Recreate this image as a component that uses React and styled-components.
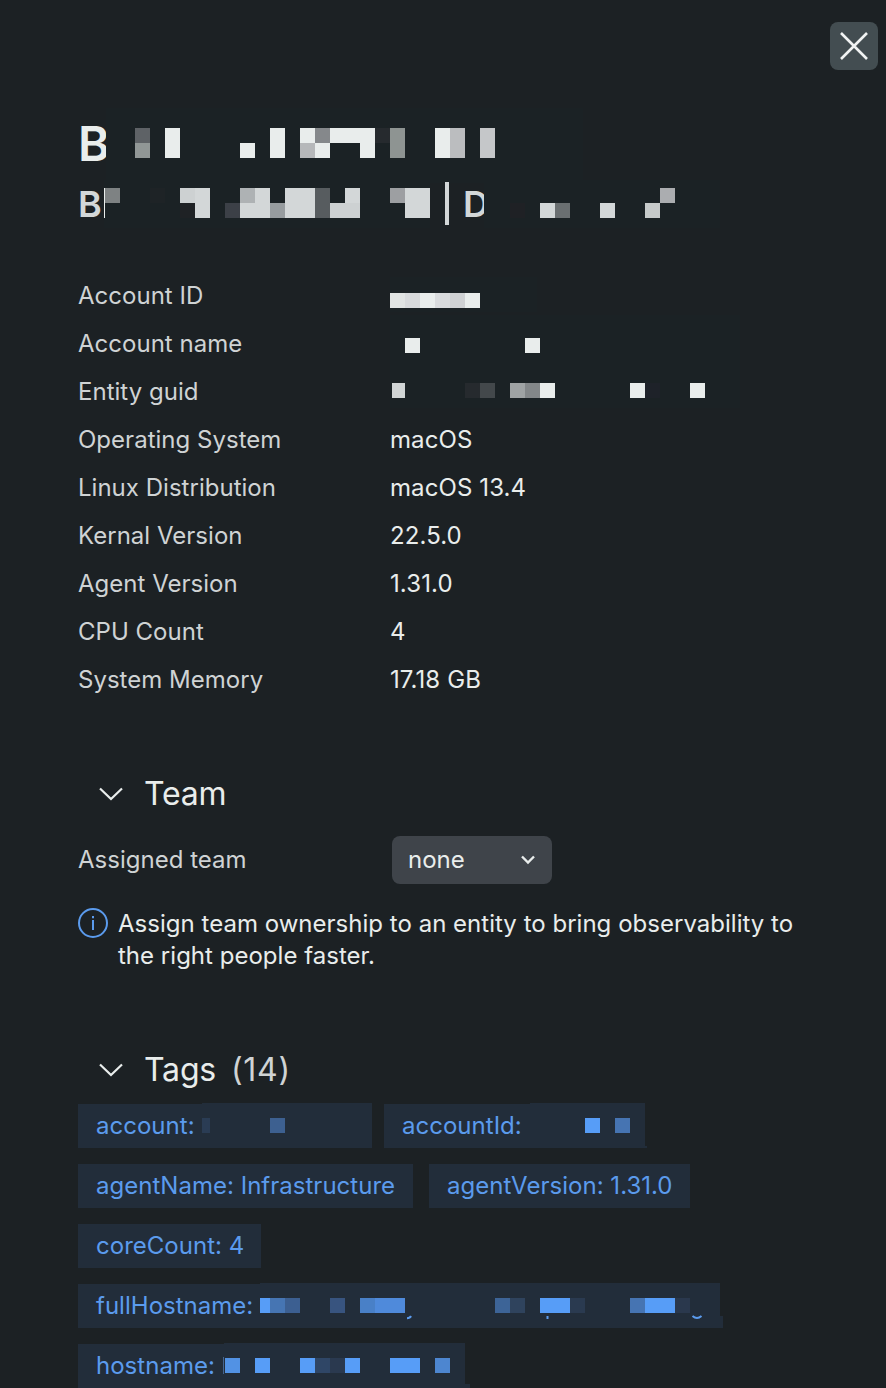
import React from "react";
import styled, { createGlobalStyle } from "styled-components";

const BG = "#1c2124";
const PATCH = "#1b2225";
const TAG_BG = "#222d3a";
const W = "#e9edec";
const L = "#d3d7d8";
const BLUE = "#579df7";

const GlobalStyle = createGlobalStyle`
  * { box-sizing: border-box; }
  html { overflow: hidden; }
  body {
    margin: 0;
    background: ${BG};
    font-family: Inter, "Liberation Sans", sans-serif;
    color: ${W};
  }
`;

const Panel = styled.main`
  position: relative;
  display: flex;
  flex-direction: column;
  width: 886px;
  height: 1388px;
  padding: 118px 78px 0;
  overflow: hidden;
  background: ${BG};
  font-size: 24px;
  line-height: 32px;
  letter-spacing: 0.02px;
`;

const CloseButton = styled.button`
  position: absolute;
  top: 22px;
  right: 8px;
  display: grid;
  place-items: center;
  width: 48px;
  height: 48px;
  padding: 0;
  border: 0;
  border-radius: 8px;
  background: #434d51;
  color: #f1f3f3;
`;

const Heading = styled.header`
  display: flex;
  flex-direction: column;
  margin-bottom: 40px;
`;

const HeadingRow = styled.div`
  display: flex;
  height: ${(p) => p.$height}px;
`;

const Title = styled.h1`
  width: 28px;
  margin: 0;
  font-size: 48px;
  font-weight: 600;
  line-height: 52px;
  letter-spacing: 0;
`;

const Subtitle = styled.h2`
  width: ${(p) => p.$width}px;
  margin: 0;
  color: ${L};
  font-size: 36px;
  font-weight: 600;
  line-height: 52px;
  letter-spacing: 0;
`;

const Divider = styled.span`
  width: 4px;
  height: 43px;
  margin: 4px 14px 0 15px;
  background: ${L};
`;

const MosaicSvg = styled.svg`
  display: block;
  flex: none;
  overflow: visible;
`;

const Details = styled.dl`
  margin: 0;
`;

const DetailRow = styled.div`
  display: grid;
  grid-template-columns: 312px 1fr;
  align-items: center;
  height: 48px;
`;

const Label = styled.dt`
  color: #cfd3d4;
`;

const Value = styled.dd`
  margin: 0;
  letter-spacing: 0.1px;
`;

const SectionTitle = styled.h3`
  display: flex;
  align-items: center;
  height: 44px;
  margin: ${(p) => p.$top}px 0 0 20px;
  font-size: 32px;
  font-weight: 400;
  line-height: 44px;
  letter-spacing: -0.2px;

  svg { margin-right: 20px; }
`;

const Count = styled.span`
  margin-left: 15px;
  color: #cfd3d4;
  letter-spacing: 0.7px;
`;

const TeamRow = styled.div`
  display: grid;
  grid-template-columns: 314px 160px;
  align-items: center;
  height: 48px;
  margin-top: 20px;
  color: #cfd3d4;
`;

const Select = styled.button`
  display: flex;
  align-items: center;
  justify-content: space-between;
  height: 48px;
  padding: 0 16px;
  border: 0;
  border-radius: 8px;
  background: #3f444a;
  color: ${W};
  font: inherit;
  letter-spacing: inherit;
`;

const Hint = styled.div`
  display: flex;
  gap: 10px;
  margin-top: 24px;

  svg { flex: none; }
  p { margin: 0; white-space: nowrap; }
`;

const Tags = styled.div`
  display: flex;
  flex-direction: column;
  gap: 16px;
  margin-top: 12px;
`;

const TagRow = styled.div`
  display: flex;
  gap: 16px;
`;

const Tag = styled.span`
  display: flex;
  align-items: center;
  flex: none;
  width: ${(p) => p.$width}px;
  height: 44px;
  padding-left: 18px;
  background: ${TAG_BG};
  color: #5b9bed;
  white-space: nowrap;
`;

const TagKey = styled.span`
  flex: none;
  width: ${(p) => p.$width}px;
`;

/* cells: [x, y, width, height, fill] */
const Mosaic = ({ width, height, cells, children }) => (
  <MosaicSvg width={width} height={height} shapeRendering="crispEdges" aria-hidden="true">
    {cells.map(([x, y, w, h, fill], i) => (
      <rect key={i} x={x} y={y} width={w} height={h} fill={fill} />
    ))}
    {children}
  </MosaicSvg>
);

const titleCells = [
  [0, -10, 477, 75, PATCH],
  [29, 10, 15, 15, "#5e6266"], [29, 25, 15, 15, "#919796"],
  [59, 10, 15, 30, W], [134, 25, 15, 15, W], [164, 10, 15, 30, W],
  [194, 10, 15, 15, W], [194, 25, 15, 15, "#b6b8ba"],
  [209, 10, 15, 15, "#85888b"], [209, 25, 15, 15, W],
  [224, 10, 45, 15, W], [254, 25, 15, 15, W],
  [269, 10, 15, 15, "#262a2e"], [284, 10, 15, 30, "#8e9492"],
  [329, 10, 15, 30, W], [344, 10, 15, 30, "#bbbdbf"], [374, 10, 15, 30, "#c5c7c9"],
];

const subtitleCells = [
  [0, 2, 326, 48, PATCH],
  [0, 10, 1, 30, W], [1, 10, 15, 15, "#7e8283"], [46, 10, 15, 15, "#1e2326"],
  [76, 10, 15, 15, "#cdd1d2"], [76, 25, 15, 15, "#1f2225"], [91, 10, 15, 30, L],
  [121, 25, 15, 15, "#3c4047"], [136, 10, 15, 15, "#aeb2b4"], [136, 25, 15, 15, L],
  [151, 10, 15, 30, L], [166, 25, 15, 15, "#979c9f"], [181, 10, 30, 30, L],
  [211, 10, 15, 30, "#575c5f"], [226, 25, 30, 15, "#cdd1d2"], [241, 10, 15, 15, L],
  [286, 10, 15, 15, "#9d9fa2"], [301, 10, 25, 30, L],
];

const subtitleEndCells = [
  [0, 2, 236, 48, PATCH],
  [26, 25, 15, 15, "#1f2125"], [56, 25, 15, 15, L], [71, 25, 15, 15, "#6a6f71"],
  [116, 25, 15, 15, L], [161, 25, 15, 15, "#c6caca"], [176, 10, 15, 15, "#abadb0"],
];

const accountIdCells = [
  [0, 5, 147, 35, PATCH],
  [0, 21, 15, 15, "#e1e4e3"], [15, 21, 15, 15, "#d8dadc"], [30, 21, 15, 15, W],
  [45, 21, 15, 15, "#d9dbdd"], [60, 21, 15, 15, "#cfd1d3"], [75, 21, 15, 15, W],
];

const accountNameCells = [
  [0, -5, 350, 53, PATCH], [15, 18, 15, 15, W], [135, 18, 15, 15, W],
];

const guidCells = [
  [0, 0, 350, 40, PATCH],
  [2, 15, 13, 15, "#d1d5d5"], [75, 15, 15, 15, "#262a2e"], [90, 15, 15, 15, "#43484b"],
  [120, 15, 15, 15, "#9fa3a4"], [135, 15, 15, 15, "#838789"], [150, 15, 15, 15, W],
  [240, 15, 15, 15, W], [255, 15, 15, 15, "#1e2229"], [300, 15, 15, 15, W],
];

const accountCells = [
  [0, -1, 170, 45, TAG_BG], [0, 14, 8, 15, "#2a3c54"], [68, 14, 15, 15, "#3d6090"],
];
const accountNumberCells = [
  [0, -1, 115, 44, TAG_BG], [115, 0, 2, 42, BG],
  [55, 14, 15, 15, BLUE], [85, 14, 15, 15, "#4674b2"],
];
const fullHostCells = [
  [0, -1, 460, 34, TAG_BG], [460, 0, 3, 32, BG],
  [0, 14, 10, 15, BLUE], [10, 14, 15, 15, "#4675b3"], [25, 14, 15, 15, "#3c5f91"],
  [70, 14, 15, 15, "#38547f"], [100, 14, 15, 15, "#4980c7"], [115, 14, 30, 15, "#4f8adb"],
  [235, 14, 15, 15, "#3d6497"], [250, 14, 15, 15, "#2f435d"],
  [280, 14, 30, 15, BLUE], [310, 14, 15, 15, "#2a3a50"],
  [370, 14, 15, 15, "#4674b2"], [385, 14, 30, 15, BLUE], [415, 14, 15, 15, "#2a384d"],
];
const hostCells = [
  [0, -1, 241, 41, TAG_BG], [241, 0, 5, 40, BG],
  [-1, 13, 1, 17, "#45658f"], [1, 14, 15, 15, "#5292e4"], [31, 14, 15, 15, BLUE],
  [76, 14, 15, 15, BLUE], [91, 14, 15, 15, "#2f4666"], [106, 14, 15, 15, "#2a394f"],
  [121, 14, 15, 15, BLUE], [166, 14, 30, 15, BLUE], [211, 14, 15, 15, "#4d86d0"],
];

const details = [
  ["Account ID", <Mosaic width={350} height={48} cells={accountIdCells} />],
  ["Account name", <Mosaic width={350} height={48} cells={accountNameCells} />],
  ["Entity guid", <Mosaic width={350} height={48} cells={guidCells} />],
  ["Operating System", "macOS"],
  ["Linux Distribution", "macOS 13.4"],
  ["Kernal Version", "22.5.0"],
  ["Agent Version", "1.31.0"],
  ["CPU Count", "4"],
  ["System Memory", "17.18 GB"],
];

const SectionChevron = () => (
  <svg width="26" height="26" viewBox="0 0 26 26" fill="none" stroke={W} strokeWidth="2.2">
    <path d="M2 7.5 13 18 24 7.5" />
  </svg>
);

export default function App() {
  return (
    <>
      <GlobalStyle />
      <Panel>
        <CloseButton aria-label="Close">
          <svg width="28" height="28" viewBox="0 0 28 28" stroke="currentColor" strokeWidth="2.6">
            <path d="M1 1 27 27M27 1 1 27" />
          </svg>
        </CloseButton>

        <Heading>
          <HeadingRow $height={60}>
            <Title>B</Title>
            <Mosaic width={477} height={52} cells={titleCells} />
          </HeadingRow>
          <HeadingRow $height={54}>
            <Subtitle $width={26}>B</Subtitle>
            <Mosaic width={326} height={52} cells={subtitleCells} />
            <Divider />
            <Subtitle $width={21}>D</Subtitle>
            <Mosaic width={236} height={52} cells={subtitleEndCells} />
          </HeadingRow>
        </Heading>

        <Details>
          {details.map(([label, value]) => (
            <DetailRow key={label}>
              <Label>{label}</Label>
              <Value>{value}</Value>
            </DetailRow>
          ))}
        </Details>

        <SectionTitle $top={68}>
          <SectionChevron />
          Team
        </SectionTitle>
        <TeamRow>
          Assigned team
          <Select>
            none
            <svg width="16" height="16" viewBox="0 0 16 16" fill="none" stroke="currentColor" strokeWidth="2.4">
              <path d="M2 4.5 8 10.5 14 4.5" />
            </svg>
          </Select>
        </TeamRow>
        <Hint>
          <svg width="30" height="30" viewBox="0 0 30 30" fill="none" stroke="#5b9bed" strokeWidth="2">
            <circle cx="15" cy="15" r="14" />
            <path d="M15 12v10M15 8v2.2" />
          </svg>
          <p>
            Assign team ownership to an entity to bring observability to
            <br />
            the right people faster.
          </p>
        </Hint>

        <SectionTitle $top={76}>
          <SectionChevron />
          Tags
          <Count>(14)</Count>
        </SectionTitle>
        <Tags>
          <TagRow>
            <Tag $width={290}>
              <TagKey $width={106}>account:</TagKey>
              <Mosaic width={166} height={44} cells={accountCells} />
            </Tag>
            <Tag $width={263}>
              <TagKey $width={128}>accountId:</TagKey>
              <Mosaic width={115} height={44} cells={accountNumberCells} />
            </Tag>
          </TagRow>
          <TagRow>
            <Tag $width={335}>agentName: Infrastructure</Tag>
            <Tag $width={261}>agentVersion: 1.31.0</Tag>
          </TagRow>
          <TagRow>
            <Tag $width={183}>coreCount: 4</Tag>
          </TagRow>
          <TagRow>
            <Tag $width={645}>
              <TagKey $width={164}>fullHostname:</TagKey>
              <Mosaic width={460} height={44} cells={fullHostCells}>
                <g fill="none" stroke="#5b9bed" strokeWidth="2" shapeRendering="auto">
                  <path d="M147 34.2q3 0 4-2.2M287.500 32v3M432.500 32q4.500 4 9 0" />
                </g>
              </Mosaic>
            </Tag>
          </TagRow>
          <TagRow>
            <Tag $width={392}>
              <TagKey $width={128}>hostname:</TagKey>
              <Mosaic width={241} height={44} cells={hostCells} />
            </Tag>
          </TagRow>
        </Tags>
      </Panel>
    </>
  );
}
